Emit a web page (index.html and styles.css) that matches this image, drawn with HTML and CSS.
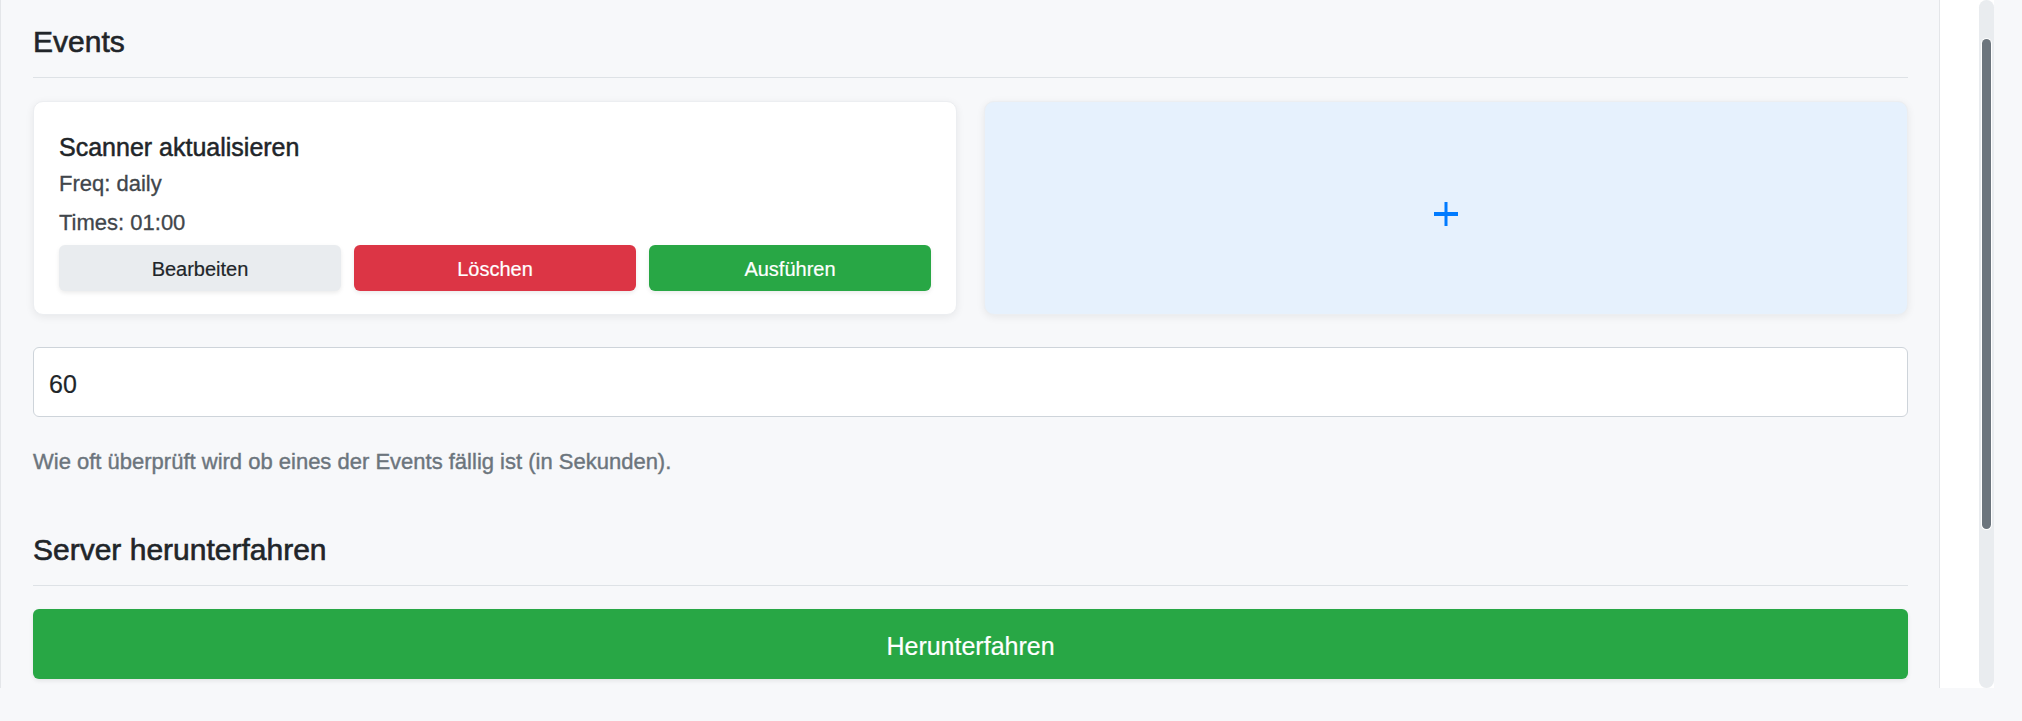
FILE: index.html
```html
<!DOCTYPE html>
<html lang="de">
<head>
<meta charset="utf-8">
<title>Einstellungen</title>
<link rel="stylesheet" href="styles.css">
</head>
<body>
<div class="app">
  <main class="panel">
    <section class="section">
      <h4 class="section-title">Events</h4>
      <hr class="divider">
      <div class="event-grid">
        <div class="card event-card">
          <h5 class="event-title">Scanner aktualisieren</h5>
          <p class="event-meta">Freq: daily</p>
          <p class="event-meta">Times: 01:00</p>
          <div class="event-actions">
            <button class="btn btn-light" type="button">Bearbeiten</button>
            <button class="btn btn-danger" type="button">Löschen</button>
            <button class="btn btn-success" type="button">Ausführen</button>
          </div>
        </div>
        <div class="card add-card" role="button" aria-label="Event hinzufügen">
          <svg class="add-icon" width="24" height="24" viewBox="0 0 24 24" aria-hidden="true">
            <rect x="10.5" y="0" width="3" height="24" fill="#007bff"/>
            <rect x="0" y="10" width="24" height="4" fill="#007bff"/>
          </svg>
        </div>
      </div>
      <input class="form-control" type="text" value="60">
      <small class="form-text">Wie oft überprüft wird ob eines der Events fällig ist (in Sekunden).</small>
    </section>
    <section class="section">
      <h4 class="section-title section-title--spaced">Server herunterfahren</h4>
      <hr class="divider">
      <button class="btn btn-success btn-block" type="button">Herunterfahren</button>
    </section>
  </main>
  <div class="gutter">
    <div class="scroll-track"><div class="scroll-thumb"></div></div>
  </div>
</div>
</body>
</html>
```

FILE: styles.css
```css
* {
  box-sizing: border-box;
}

html,
body {
  margin: 0;
}

body {
  background: #f7f8fa;
  font-family: "Liberation Sans", Arial, sans-serif;
  color: #212529;
  -webkit-text-stroke: 0.2px currentColor;
}

.app {
  display: flex;
  height: 688px;
}

.panel {
  flex: none;
  width: 1940px;
  border-left: 1px solid #e4e6e9;
  border-right: 1px solid #e4e6e9;
  padding: 24px 31px 0 32px;
}

.section-title {
  margin: 0;
  font-size: 30px;
  line-height: 36px;
  font-weight: 400;
  color: #212529;
  -webkit-text-stroke: 0.6px currentColor;
}

.section-title--spaced {
  margin-top: 55px;
}

.divider {
  height: 0;
  border: 0;
  border-top: 1px solid #dee2e6;
  margin: 17px 0 23px;
}

.event-grid {
  display: grid;
  grid-template-columns: 1fr 1fr;
  column-gap: 27px;
}

.card {
  height: 214px;
  background: #fff;
  border: 1px solid #eceef1;
  border-radius: 10px;
  box-shadow: 0 2px 8px rgba(0, 0, 0, 0.07);
}

.event-card {
  padding: 30px 25px 0;
}

.event-title {
  margin: 0 0 5px;
  font-size: 25px;
  line-height: 30px;
  font-weight: 400;
  color: #212529;
  -webkit-text-stroke: 0.5px currentColor;
}

.event-meta {
  margin: 0 0 6px;
  font-size: 22px;
  line-height: 33px;
  color: #41464b;
  -webkit-text-stroke: 0.3px currentColor;
}

.event-actions {
  display: grid;
  grid-template-columns: repeat(3, 1fr);
  column-gap: 13px;
}

.btn {
  height: 46px;
  border: 0;
  border-radius: 6px;
  padding: 2px 0 0;
  font-family: "Liberation Sans", Arial, sans-serif;
  font-size: 20px;
  line-height: 24px;
  text-align: center;
  box-shadow: 0 2px 4px rgba(0, 0, 0, 0.08);
  cursor: pointer;
  -webkit-text-stroke: 0.2px currentColor;
}

.btn-light {
  background: #e9ecef;
  color: #212529;
}

.btn-danger {
  background: #dc3545;
  color: #fff;
}

.btn-success {
  background: #28a745;
  color: #fff;
}

.btn-block {
  display: block;
  width: 100%;
  height: 70px;
  padding-top: 3px;
  font-size: 25px;
  line-height: 30px;
}

.add-card {
  display: flex;
  align-items: center;
  justify-content: center;
  padding-top: 12px;
  background: #e6f1fd;
  cursor: pointer;
}

.add-icon {
  display: block;
}

.form-control {
  display: block;
  width: 100%;
  height: 70px;
  margin-top: 32px;
  padding: 5px 15px 0;
  font-family: "Liberation Sans", Arial, sans-serif;
  font-size: 25px;
  line-height: 37.5px;
  color: #212529;
  background: #fff;
  border: 1px solid #ced4da;
  border-radius: 6px;
  outline: none;
}

.form-text {
  display: block;
  margin-top: 30px;
  font-size: 22px;
  line-height: 30px;
  color: #6c757d;
  -webkit-text-stroke: 0.4px currentColor;
}

.gutter {
  flex: none;
  width: 54px;
  background: #fff;
  display: flex;
  justify-content: flex-end;
}

.scroll-track {
  width: 15px;
  height: 100%;
  padding: 39px 3px 0;
  background: #e9ecef;
  border-radius: 8px;
}

.scroll-thumb {
  height: 490px;
  background: #6c757d;
  border-radius: 5px;
  box-shadow: 0 0 0 1px #fff;
}
```
